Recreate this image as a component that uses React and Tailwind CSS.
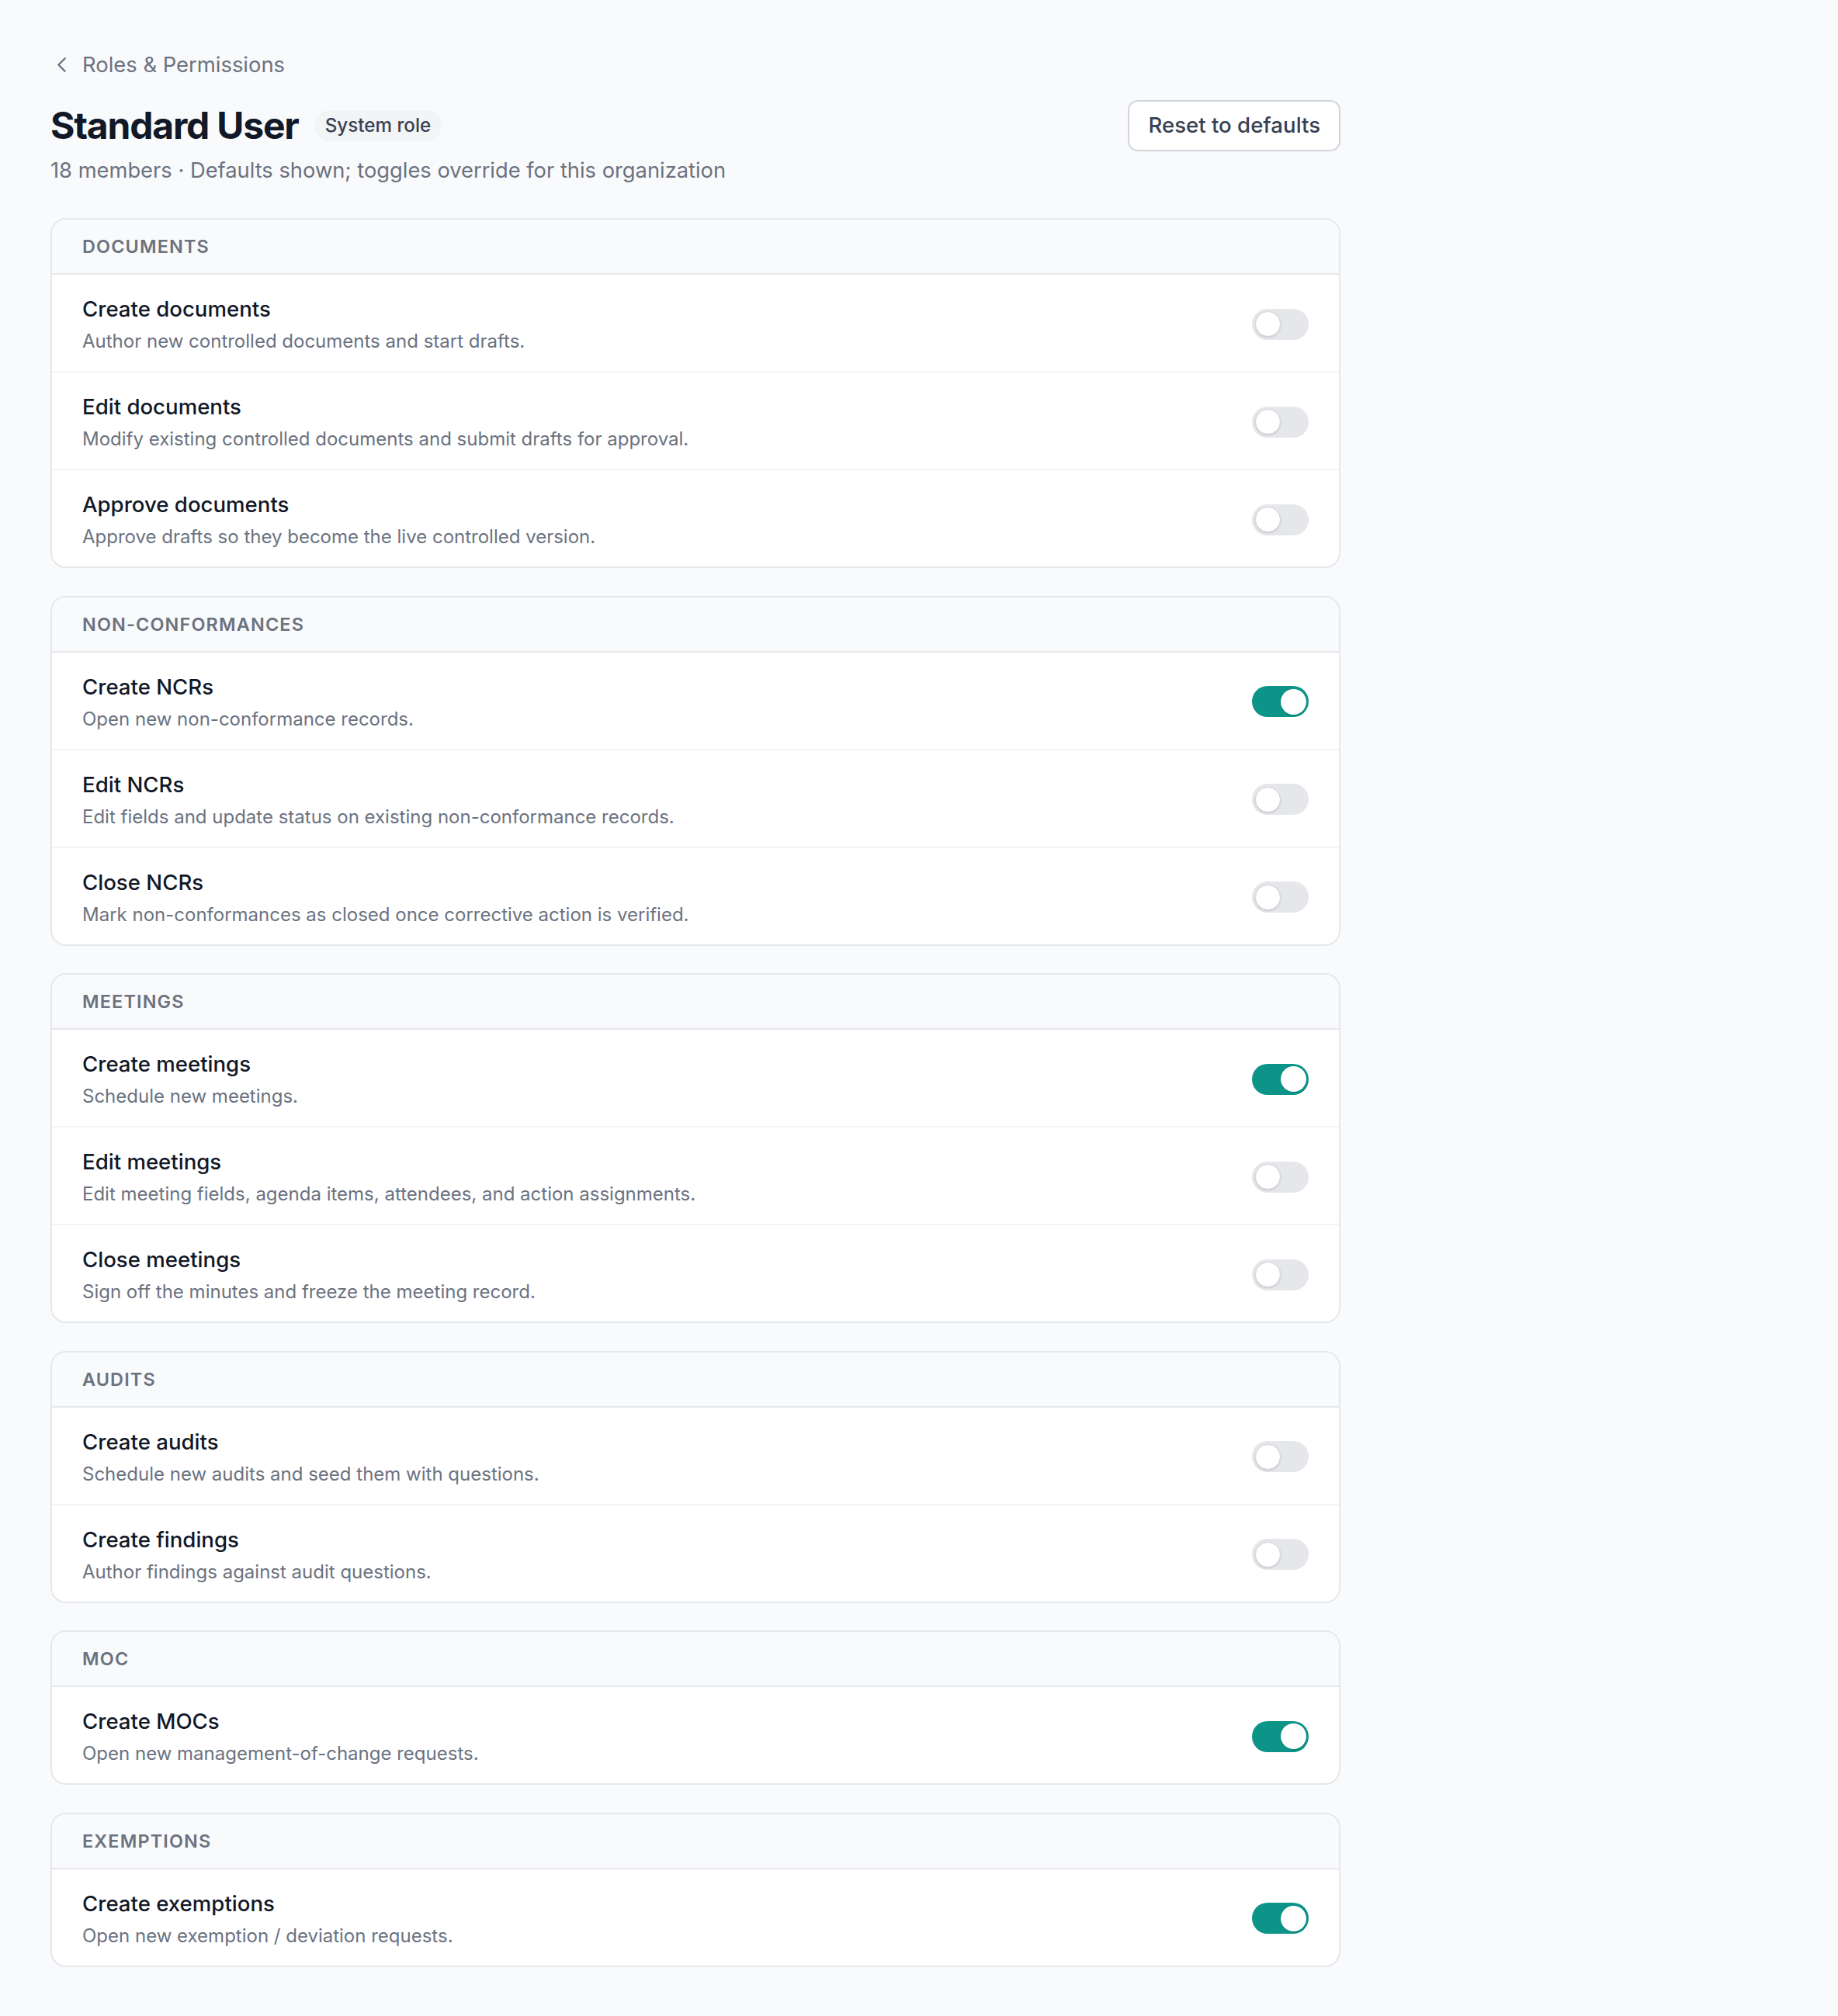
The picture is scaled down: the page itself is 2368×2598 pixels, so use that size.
import { ChevronLeft } from 'lucide-react'

const SECTIONS = [
  {
    name: 'Documents',
    perms: [
      { title: 'Create documents', desc: 'Author new controlled documents and start drafts.', on: false },
      { title: 'Edit documents', desc: 'Modify existing controlled documents and submit drafts for approval.', on: false },
      { title: 'Approve documents', desc: 'Approve drafts so they become the live controlled version.', on: false },
    ],
  },
  {
    name: 'Non-conformances',
    perms: [
      { title: 'Create NCRs', desc: 'Open new non-conformance records.', on: true },
      { title: 'Edit NCRs', desc: 'Edit fields and update status on existing non-conformance records.', on: false },
      { title: 'Close NCRs', desc: 'Mark non-conformances as closed once corrective action is verified.', on: false },
    ],
  },
  {
    name: 'Meetings',
    perms: [
      { title: 'Create meetings', desc: 'Schedule new meetings.', on: true },
      { title: 'Edit meetings', desc: 'Edit meeting fields, agenda items, attendees, and action assignments.', on: false },
      { title: 'Close meetings', desc: 'Sign off the minutes and freeze the meeting record.', on: false },
    ],
  },
  {
    name: 'Audits',
    perms: [
      { title: 'Create audits', desc: 'Schedule new audits and seed them with questions.', on: false },
      { title: 'Create findings', desc: 'Author findings against audit questions.', on: false },
    ],
  },
  {
    name: 'MOC',
    perms: [
      { title: 'Create MOCs', desc: 'Open new management-of-change requests.', on: true },
    ],
  },
  {
    name: 'Exemptions',
    perms: [
      { title: 'Create exemptions', desc: 'Open new exemption / deviation requests.', on: true },
    ],
  },
]

function Toggle({ on }) {
  return (
    <button
      type="button"
      className={`relative shrink-0 w-[73px] h-[40px] rounded-full ${on ? 'bg-[#0d9488]' : 'bg-[#e5e7eb]'}`}
    >
      <span
        className={`absolute top-[3.5px] w-[33px] h-[33px] rounded-full bg-white shadow-sm ${on ? 'left-[36.5px]' : 'left-[3.5px] border border-[#d1d5db]'}`}
      />
    </button>
  )
}

function Section({ name, perms }) {
  return (
    <div className="w-[1662px] bg-white border-2 border-[#e5e7eb] rounded-[20px] overflow-hidden">
      <div className="bg-[#f9fafb] border-b-2 border-[#e5e7eb] px-[39px] py-[18px]">
        <h2 className="text-[23.4px] leading-[33px] font-semibold uppercase tracking-wider text-[#6b7280]">{name}</h2>
      </div>
      <div className="divide-y-2 divide-[#f3f4f6]">
        {perms.map((p) => (
          <div key={p.title} className="flex items-center justify-between px-[39px] pt-[25px] pb-[22px]">
            <div className="min-w-0">
              <p className="text-[27.6px] leading-[38px] font-medium text-[#111827]">{p.title}</p>
              <p className="mt-[6px] text-[24px] leading-[33px] text-[#6b7280]">{p.desc}</p>
            </div>
            <Toggle on={p.on} />
          </div>
        ))}
      </div>
    </div>
  )
}

export default function App() {
  return (
    <div className="min-h-screen bg-[#f9fafb] pl-[65px] pt-[63px] pb-[66px] font-['Inter',sans-serif] antialiased">
      <div className="w-[1662px]">
        {/* Back link */}
        <a href="#" className="flex items-center gap-[10px] text-[27.4px] leading-[40px] text-[#6b7280]">
          <ChevronLeft size={33} strokeWidth={1.75} className="-ml-[2px]" />
          <span>Roles &amp; Permissions</span>
        </a>

        {/* Header */}
        <div className="mt-[26px] flex items-start justify-between">
          <div>
            <div className="h-[66px] flex items-center gap-[20px]">
              <h1 className="text-[48px] leading-[60px] font-bold tracking-tight text-[#111827]">Standard User</h1>
              <span className="h-[40px] px-[14px] flex items-center rounded-full bg-[#f3f4f6] text-[24.2px] font-medium text-[#374151]">
                System role
              </span>
            </div>
            <p className="mt-[5px] text-[27.3px] leading-[40px] text-[#6b7280]">
              18 members · Defaults shown; toggles override for this organization
            </p>
          </div>
          <button
            type="button"
            className="h-[66px] px-[24px] rounded-[13px] border-2 border-[#d1d5db] bg-white text-[27.6px] font-medium text-[#374151]"
          >
            Reset to defaults
          </button>
        </div>

        {/* Permission sections */}
        <div className="mt-[41px] flex flex-col gap-[35.5px]">
          {SECTIONS.map((s) => (
            <Section key={s.name} name={s.name} perms={s.perms} />
          ))}
        </div>
      </div>
    </div>
  )
}
